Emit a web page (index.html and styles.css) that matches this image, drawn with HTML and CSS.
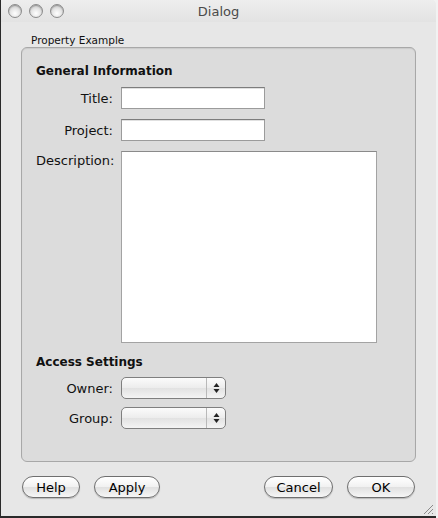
FILE: index.html
```html
<!DOCTYPE html>
<html>
<head>
<meta charset="utf-8">
<link rel="stylesheet" href="styles.css">
</head>
<body>
<div class="window">
  <div class="titlebar">
    <div class="lights">
      <span class="light"></span><span class="light"></span><span class="light"></span>
    </div>
    <div class="title">Dialog</div>
  </div>
  <div class="content">
    <div class="group-label">Property Example</div>
    <div class="group">
      <div class="section-title">General Information</div>
      <div class="row">
        <label class="lbl">Title:</label>
        <div class="field"></div>
      </div>
      <div class="row">
        <label class="lbl">Project:</label>
        <div class="field"></div>
      </div>
      <div class="row row-top">
        <label class="lbl">Description:</label>
        <div class="textarea"></div>
      </div>
      <div class="section-title section-2">Access Settings</div>
      <div class="row row-combo">
        <label class="lbl">Owner:</label>
        <div class="combo"><span class="arrows"><svg width="7" height="12" viewBox="0 0 7 12"><path d="M3.5 1 L6.5 5 L0.5 5 Z M3.5 11 L6.5 7 L0.5 7 Z" fill="#222"/></svg></span></div>
      </div>
      <div class="row row-combo">
        <label class="lbl">Group:</label>
        <div class="combo"><span class="arrows"><svg width="7" height="12" viewBox="0 0 7 12"><path d="M3.5 1 L6.5 5 L0.5 5 Z M3.5 11 L6.5 7 L0.5 7 Z" fill="#222"/></svg></span></div>
      </div>
    </div>
    <div class="buttons">
      <div class="left">
        <button class="btn btn-help">Help</button>
        <button class="btn btn-apply">Apply</button>
      </div>
      <div class="right">
        <button class="btn btn-cancel">Cancel</button>
        <button class="btn btn-ok">OK</button>
      </div>
    </div>
  </div>
  <div class="grip"><svg width="11" height="11" viewBox="0 0 11 11"><path d="M10 1 L1 10 M10 5 L5 10 M10 9 L9 10" stroke="#8a8a8a" stroke-width="1"/></svg></div>
</div>
</body>
</html>
```
FILE: styles.css
```css
html, body {
  margin: 0;
  padding: 0;
}
body {
  background: #f2f2f2;
  font-family: "DejaVu Sans", "Liberation Sans", sans-serif;
  font-size: 13px;
  color: #111;
  width: 438px;
  height: 518px;
  overflow: hidden;
}
.window {
  position: relative;
  width: 435px;
  height: 516px;
  background: #e7e7e7;
  border-left: 1px solid #2a2a2a;
  border-bottom: 2px solid #2a2a2a;
  border-radius: 0 5px 0 0;
  box-sizing: content-box;
}
.titlebar {
  height: 22px;
  background: linear-gradient(#eeeeee, #e3e3e3);
  display: flex;
  align-items: center;
  position: relative;
  border-radius: 0 5px 0 0;
}
.lights {
  display: flex;
  gap: 7px;
  padding-left: 7px;
}
.light {
  width: 12px;
  height: 12px;
  border-radius: 50%;
  border: 1px solid #8c8c8c;
  background: radial-gradient(circle at 50% 70%, #ffffff 0%, #e6e6e6 45%, #b9b9b9 100%);
  box-shadow: inset 0 1px 1px rgba(0,0,0,0.25);
}
.title {
  position: absolute;
  left: 0;
  right: 0;
  top: 4px;
  text-align: center;
  color: #4a4a4a;
  font-size: 13px;
}
.content {
  padding: 11px 20px 0 20px;
}
.group-label {
  font-size: 10.5px;
  margin-left: 10px;
  height: 14px;
  line-height: 14px;
}
.group {
  height: 415px;
  box-sizing: border-box;
  border: 1px solid #a8a8a8;
  border-radius: 6px;
  background: #dcdcdc;
  box-shadow: inset 0 1px 1px rgba(0,0,0,0.08);
  padding: 15px 0 0 14px;
}
.section-title {
  font-weight: bold;
  font-size: 12px;
  height: 17px;
  line-height: 17px;
  margin-bottom: 7px;
}
.section-2 {
  margin-top: 11px;
  margin-bottom: 6px;
}
.row {
  display: flex;
  align-items: center;
  margin-bottom: 10px;
}
.row-combo {
  margin-bottom: 8px;
}
.row-top {
  align-items: flex-start;
}
.row-top .lbl {
  padding-top: 2px;
}
.lbl {
  width: 77px;
  text-align: right;
  margin-right: 8px;
  font-size: 13px;
}
.field {
  width: 144px;
  height: 22px;
  box-sizing: border-box;
  background: #fff;
  border: 1px solid #9b9b9b;
  border-top-color: #7d7d7d;
  box-shadow: inset 0 1px 0 #e0e0e0;
}
.textarea {
  width: 256px;
  height: 192px;
  box-sizing: border-box;
  background: #fff;
  border: 1px solid #a3a3a3;
  border-top-color: #8a8a8a;
}
.combo {
  position: relative;
  width: 105px;
  height: 22px;
  box-sizing: border-box;
  border: 1px solid #7f7f7f;
  border-radius: 5px;
  background: linear-gradient(#fbfbfb, #ececec 50%, #e2e2e2 51%, #f4f4f4);
}
.arrows {
  position: absolute;
  right: 0;
  top: 0;
  bottom: 0;
  width: 18px;
  border-left: 1px solid #b9b9b9;
  display: flex;
  align-items: center;
  justify-content: center;
}
.buttons {
  display: flex;
  justify-content: space-between;
  margin-top: 14px;
  padding: 0 1px;
}
.left, .right {
  display: flex;
  gap: 14px;
}
.btn {
  height: 22px;
  box-sizing: border-box;
  border: 1px solid #6f6f6f;
  border-radius: 11px;
  background: linear-gradient(#ffffff, #f1f1f1 50%, #e0e0e0 51%, #f6f6f6);
  font-family: "DejaVu Sans", "Liberation Sans", sans-serif;
  font-size: 13px;
  color: #000;
  padding: 0;
  box-shadow: 0 1px 1px rgba(0,0,0,0.2);
}
.btn-help { width: 58px; }
.btn-apply { width: 66px; }
.btn-cancel { width: 69px; }
.btn-ok { width: 68px; }
.grip {
  position: absolute;
  right: 2px;
  bottom: 2px;
  width: 11px;
  height: 11px;
}
```
